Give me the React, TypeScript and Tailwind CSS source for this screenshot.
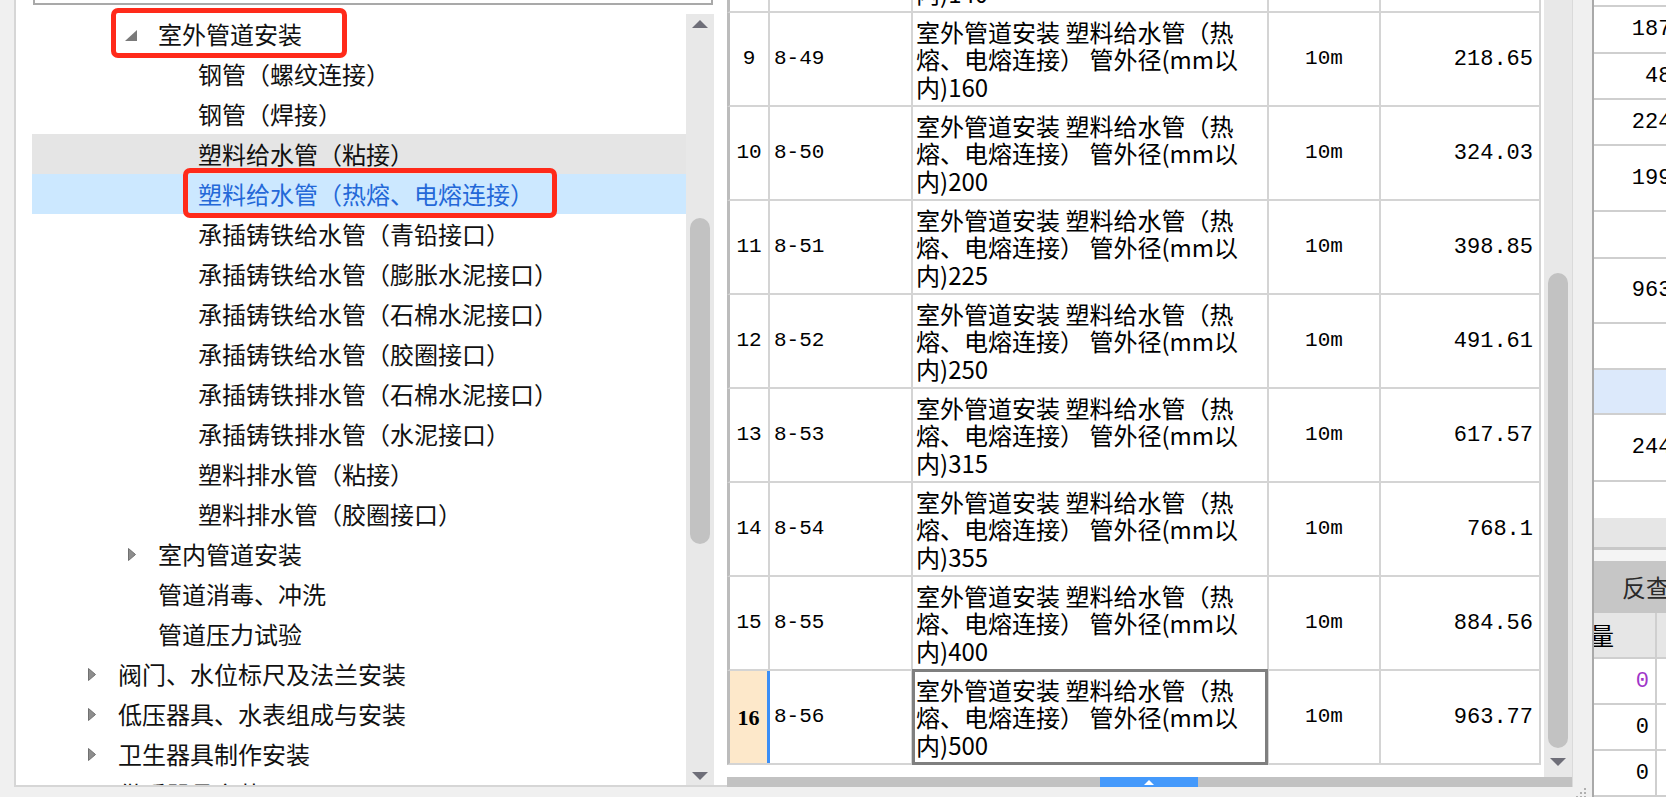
import React from 'react'

type Node = { t: string; l: 1 | 2 | 3; icon?: 'open' | 'closed'; state?: 'hover' | 'sel' }

const tree: Node[] = [
  { t: '室外管道安装', l: 2, icon: 'open' },
  { t: '钢管（螺纹连接）', l: 3 },
  { t: '钢管（焊接）', l: 3 },
  { t: '塑料给水管（粘接）', l: 3, state: 'hover' },
  { t: '塑料给水管（热熔、电熔连接）', l: 3, state: 'sel' },
  { t: '承插铸铁给水管（青铅接口）', l: 3 },
  { t: '承插铸铁给水管（膨胀水泥接口）', l: 3 },
  { t: '承插铸铁给水管（石棉水泥接口）', l: 3 },
  { t: '承插铸铁给水管（胶圈接口）', l: 3 },
  { t: '承插铸铁排水管（石棉水泥接口）', l: 3 },
  { t: '承插铸铁排水管（水泥接口）', l: 3 },
  { t: '塑料排水管（粘接）', l: 3 },
  { t: '塑料排水管（胶圈接口）', l: 3 },
  { t: '室内管道安装', l: 2, icon: 'closed' },
  { t: '管道消毒、冲洗', l: 2 },
  { t: '管道压力试验', l: 2 },
  { t: '阀门、水位标尺及法兰安装', l: 1, icon: 'closed' },
  { t: '低压器具、水表组成与安装', l: 1, icon: 'closed' },
  { t: '卫生器具制作安装', l: 1, icon: 'closed' },
  { t: '供暖器具安装', l: 1, icon: 'closed' },
]

const indent = { 1: 'pl-[46px]', 2: 'pl-[86px]', 3: 'pl-[126px]' }

const rows = [
  { n: '8', code: '8-48', d: '140', price: '180.24' },
  { n: '9', code: '8-49', d: '160', price: '218.65' },
  { n: '10', code: '8-50', d: '200', price: '324.03' },
  { n: '11', code: '8-51', d: '225', price: '398.85' },
  { n: '12', code: '8-52', d: '250', price: '491.61' },
  { n: '13', code: '8-53', d: '315', price: '617.57' },
  { n: '14', code: '8-54', d: '355', price: '768.1' },
  { n: '15', code: '8-55', d: '400', price: '884.56' },
  { n: '16', code: '8-56', d: '500', price: '963.77' },
]

const mono = "font-['Liberation_Mono','Noto_Sans_CJK_SC',monospace]"

function UpArrow() {
  return (
    <svg width="16" height="8" viewBox="0 0 16 8">
      <polygon points="8,0 16,8 0,8" fill="#6e6e78" />
    </svg>
  )
}

function DownArrow() {
  return (
    <svg width="16" height="8" viewBox="0 0 16 8">
      <polygon points="0,0 16,0 8,8" fill="#6e6e78" />
    </svg>
  )
}

function TreeRow({ n }: { n: Node }) {
  const bg = n.state === 'hover' ? 'bg-[#e5e5e5]' : n.state === 'sel' ? 'bg-[#cce8ff]' : ''
  const color = n.state === 'sel' ? 'text-[#2468d8]' : 'text-[#111]'
  return (
    <div className={`h-[40px] flex items-center shrink-0 ${bg} ${indent[n.l]}`}>
      <div className="w-[40px] h-full flex items-center shrink-0">
        {n.icon === 'open' && (
          <svg width="12" height="11" viewBox="0 0 12 11" className="ml-[7px] mt-[2px]">
            <polygon points="12,0 12,11 0,11" fill="#7a7a7a" />
          </svg>
        )}
        {n.icon === 'closed' && (
          <svg width="8" height="13" viewBox="0 0 8 13" className="ml-[10px]">
            <polygon points="0.5,0.5 7.5,6.5 0.5,12.5" fill="#8e8e8e" stroke="#707070" strokeWidth="1" />
          </svg>
        )}
      </div>
      <span className={`text-[24px] whitespace-nowrap ${color}`}>{n.t}</span>
    </div>
  )
}

function TableRow({ r, active }: { r: (typeof rows)[number]; active: boolean }) {
  return (
    <div className="h-[94px] flex shrink-0 border-b-2 border-[#d4d4d4] border-l-[3px] border-l-[#bcbcbc]">
      <div
        className={`w-[40px] flex items-center justify-center ${
          active
            ? "bg-[#fde8ca] border-r-[3px] border-[#3b8ef6] font-['Liberation_Serif',serif] font-bold text-[22px]"
            : `border-r-2 border-[#d4d4d4] text-[21px] ${mono}`
        }`}
      >
        {r.n}
      </div>
      <div className={`w-[143px] flex items-center pl-[4px] border-r-2 border-[#d4d4d4] text-[21px] ${mono}`}>
        {r.code}
      </div>
      <div className="relative w-[356px] flex flex-col justify-center pl-[3px] border-r-2 border-[#d4d4d4] text-[24px] leading-[27.5px] whitespace-nowrap">
        <div>室外管道安装 塑料给水管（热</div>
        <div>熔、电熔连接） 管外径(mm以</div>
        <div>内){r.d}</div>
        {active && <div className="absolute -left-[1px] -top-[2px] -right-[1px] -bottom-[2px] border-[3px] border-[#7f7f7f]" />}
      </div>
      <div className={`w-[112px] flex items-center justify-center border-r-2 border-[#d4d4d4] text-[21px] ${mono}`}>
        10m
      </div>
      <div className={`w-[160px] flex items-center justify-end pr-[6px] border-r-2 border-[#d4d4d4] text-[22px] ${mono}`}>
        {r.price}
      </div>
    </div>
  )
}

const rightRows = [
  { h: 'h-[7px]', v: '' },
  { h: 'h-[47px]', v: '187.83' },
  { h: 'h-[46px]', v: '48.26' },
  { h: 'h-[46px]', v: '224.79' },
  { h: 'h-[66px]', v: '199.52' },
  { h: 'h-[47px]', v: '' },
  { h: 'h-[65px]', v: '963.77' },
  { h: 'h-[46px]', v: '' },
  { h: 'h-[45px]', v: '', blue: true },
  { h: 'h-[67px]', v: '244.08' },
]

export default function App() {
  return (
    <div className="w-[1666px] h-[797px] flex overflow-hidden bg-[#f0f0f0] font-['Noto_Sans_CJK_SC',sans-serif] text-black">
      {/* Left: tree */}
      <div className="w-[727px] shrink-0 flex flex-col">
        <div className="h-[787px] flex">
          <div className="w-[14px] bg-[#f0f0f0]" />
          <div className="relative flex-1 flex flex-col bg-white border-l-2 border-b-2 border-[#d6d6d6]">
            <div className="h-[14px] shrink-0 overflow-hidden">
              <div className="ml-[17px] w-[680px] h-[20px] -mt-[15px] border-2 border-[#a9a9a9]" />
            </div>
            <div className="flex flex-1 min-h-0">
              <div className="w-[670px] overflow-hidden flex flex-col pl-[16px]">
                {tree.map((n, i) => (
                  <TreeRow key={i} n={n} />
                ))}
              </div>
              <div className="w-[28px] bg-[#e8e8e8] flex flex-col items-center">
                <div className="mt-[6px]"><UpArrow /></div>
                <div className="mt-[190px] w-[20px] h-[326px] rounded-full bg-[#c2c2c2]" />
                <div className="flex-1" />
                <div className="mb-[5px]"><DownArrow /></div>
              </div>
              <div className="flex-1" />
            </div>
            {/* annotations */}
            <div className="absolute left-[95px] top-[8px] w-[236px] h-[50px] border-[5px] border-[#ff2a1a] rounded-[7px]" />
            <div className="absolute left-[167px] top-[168px] w-[374px] h-[50px] border-[5px] border-[#ff2a1a] rounded-[7px]" />
          </div>
        </div>
        <div className="h-[10px]" />
      </div>

      {/* Middle: table */}
      <div className="w-[846px] shrink-0 flex flex-col">
        <div className="h-[777px] flex bg-white">
          <div className="w-[814px] overflow-hidden">
            <div className="-mt-[81px] flex flex-col">
              {rows.map((r, i) => (
                <TableRow key={r.n} r={r} active={i === rows.length - 1} />
              ))}
            </div>
          </div>
          <div className="w-[3px]" />
          <div className="w-[28px] bg-[#e8e8e8] flex flex-col items-center">
            <div className="mt-[273px] w-[20px] h-[475px] rounded-full bg-[#c2c2c2]" />
            <div className="mt-[10px]"><DownArrow /></div>
          </div>
          <div className="w-px bg-[#dadada]" />
        </div>
        <div className="h-[10px] flex">
          <div className="w-[845px] bg-[#c2c2c2] flex">
            <div className="ml-[373px] w-[98px] h-full bg-[#4499fb] flex items-center justify-center">
              <svg width="10" height="5" viewBox="0 0 10 5">
                <polygon points="5,0 10,5 0,5" fill="#ffffff" />
              </svg>
            </div>
          </div>
          <div className="w-px bg-[#dadada]" />
        </div>
        <div className="h-[10px]" />
      </div>

      {/* Right: partial panel */}
      <div className="w-[93px] shrink-0 flex">
        <div className="w-[19px] bg-[#f0f0f0] flex flex-col">
          <div className="flex-1" />
          <svg width="19" height="10" viewBox="0 0 19 10">
            <rect x="11" y="1" width="2" height="2" fill="#b0b0b0" />
            <rect x="7" y="5" width="2" height="2" fill="#b0b0b0" />
            <rect x="11" y="5" width="2" height="2" fill="#b0b0b0" />
            <rect x="3" y="9" width="2" height="1" fill="#b0b0b0" />
            <rect x="7" y="9" width="2" height="1" fill="#b0b0b0" />
            <rect x="11" y="9" width="2" height="1" fill="#b0b0b0" />
          </svg>
        </div>
        <div className="w-[2px] bg-[#a9a9a9]" />
        <div className="w-[72px] overflow-hidden bg-white">
          <div className="w-[121px] flex flex-col">
            {rightRows.map((r, i) => (
              <div
                key={i}
                className={`${r.h} shrink-0 flex items-center justify-end pr-[4px] border-b-2 border-[#cfcfcf] text-[22px] ${mono} ${
                  r.blue ? 'bg-[#dce9fb]' : ''
                }`}
              >
                {r.v}
              </div>
            ))}
            <div className="h-[36px] shrink-0" />
            <div className="h-[29px] shrink-0 bg-[#e6e6e6]" />
            <div className="h-[3px] shrink-0 bg-[#c8c8c8]" />
            <div className="h-[11px] shrink-0 bg-[#f4f4f4]" />
            <div className="h-[52px] shrink-0 bg-[#c6c6c6] flex items-center pl-[28px] text-[24px] text-[#2a2a2a] whitespace-nowrap">
              反查
            </div>
            <div className="h-[46px] shrink-0 bg-[#e6e6e6] flex border-b-2 border-[#cfcfcf]">
              <div className="w-[63px] flex items-center border-r-2 border-[#cfcfcf] text-[24px] overflow-hidden">
                <span className="-ml-[4px]">量</span>
              </div>
            </div>
            {['0', '0', '0'].map((v, i) => (
              <div key={i} className="h-[46px] shrink-0 flex border-b-2 border-[#cfcfcf]">
                <div
                  className={`w-[63px] flex items-center justify-end pr-[6px] border-r-2 border-[#cfcfcf] text-[22px] ${mono} ${
                    i === 0 ? 'text-[#a035c8]' : 'text-black'
                  }`}
                >
                  {v}
                </div>
              </div>
            ))}
          </div>
        </div>
      </div>
    </div>
  )
}
